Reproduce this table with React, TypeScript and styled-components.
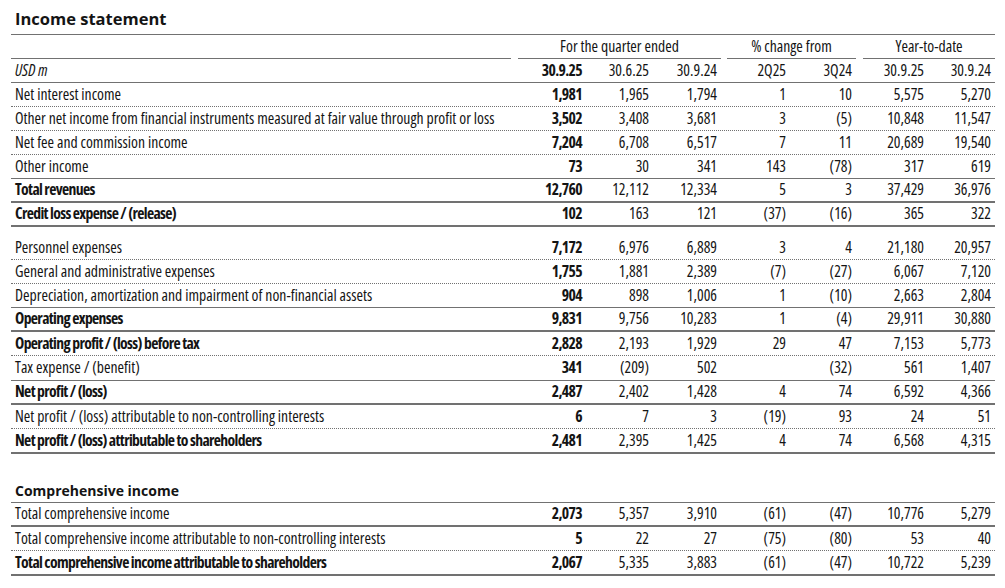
import React from "react";
import styled, { createGlobalStyle, css } from "styled-components";

const Global = createGlobalStyle`
  html, body { margin: 0; padding: 0; background: #ffffff; }
  body {
    font-family: "Open Sans", "Roboto", "Liberation Sans", sans-serif;
    font-stretch: 75%;
    color: #141414;
  }
`;

const LINE = "#717171";
const COLS = "507px 68px 67px 68px 69px 66px 72px 67px";

type Border = "dotted" | "thin" | "thick" | "none";

const boldText = css`
  font-weight: 700;
  letter-spacing: -0.65px;
`;

const Page = styled.div`
  width: 984px;
  padding: 0 10px 0 11px;
`;

const Title = styled.h1`
  margin: 0;
  box-sizing: border-box;
  height: 35px;
  padding: 9px 0 0 4px;
  font-family: "Open Sans", "Liberation Sans", Arial, sans-serif;
  font-stretch: 100%;
  font-size: 16.5px;
  line-height: 20px;
  font-weight: 700;
  border-bottom: 1px solid ${LINE};
`;

const GroupRow = styled.div`
  display: grid;
  grid-template-columns: 507px 203px 135px 139px;
  height: 24px;
`;

const Group = styled.div<{ $gapL?: number; $gapR?: number }>`
  box-sizing: border-box;
  height: 24px;
  margin-left: ${(p) => p.$gapL ?? 0}px;
  margin-right: ${(p) => p.$gapR ?? 0}px;
  border-bottom: 1px solid ${LINE};
  text-align: center;
  font-size: 15.7px;
  line-height: 22px;
`;

const borderCss = (b: Border) => {
  switch (b) {
    case "dotted":
      return css`border-bottom: 1px dotted ${LINE};`;
    case "thin":
      return css`border-bottom: 1px solid ${LINE};`;
    case "thick":
      return css`border-bottom: 2px solid ${LINE};`;
    default:
      return css`border-bottom: 1px solid transparent;`;
  }
};

const Row = styled.div<{ $border: Border; $gapTop?: number; $h?: number }>`
  display: grid;
  grid-template-columns: ${COLS};
  box-sizing: border-box;
  height: ${(p) => p.$h ?? 24}px;
  padding-bottom: 2px;
  margin-top: ${(p) => p.$gapTop ?? 0}px;
  align-items: center;
  font-size: 15.7px;
  line-height: 20px;
  ${(p) => borderCss(p.$border)}
`;

const Label = styled.div<{ $bold?: boolean; $italic?: boolean }>`
  padding-left: 4px;
  white-space: nowrap;
  font-style: ${(p) => (p.$italic ? "italic" : "normal")};
  ${(p) => p.$bold && boldText}
`;

const Num = styled.div<{ $bold?: boolean }>`
  padding-right: 4px;
  text-align: right;
  white-space: nowrap;
  ${(p) => p.$bold && boldText}
`;

const SectionHeading = styled.h2`
  margin: 25px 0 0 0;
  box-sizing: border-box;
  height: 24px;
  padding: 3px 0 0 4px;
  font-family: "Open Sans", "Liberation Sans", Arial, sans-serif;
  font-stretch: 100%;
  font-size: 14px;
  line-height: 18px;
  font-weight: 700;
  border-bottom: 1px solid ${LINE};
`;

type Line = {
  label: string;
  v: string[];
  bold?: boolean;
  border: Border;
  gapTop?: number;
  h?: number;
};

const main: Line[] = [
  { label: "Net interest income", v: ["1,981", "1,965", "1,794", "1", "10", "5,575", "5,270"], border: "dotted" },
  {
    label: "Other net income from financial instruments measured at fair value through profit or loss",
    v: ["3,502", "3,408", "3,681", "3", "(5)", "10,848", "11,547"],
    border: "dotted",
  },
  { label: "Net fee and commission income", v: ["7,204", "6,708", "6,517", "7", "11", "20,689", "19,540"], border: "dotted" },
  { label: "Other income", v: ["73", "30", "341", "143", "(78)", "317", "619"], border: "thin" },
  { label: "Total revenues", v: ["12,760", "12,112", "12,334", "5", "3", "37,429", "36,976"], bold: true, border: "thick" },
  { label: "Credit loss expense / (release)", v: ["102", "163", "121", "(37)", "(16)", "365", "322"], bold: true, border: "thick" },
  { label: "Personnel expenses", v: ["7,172", "6,976", "6,889", "3", "4", "21,180", "20,957"], border: "dotted", gapTop: 9 },
  { label: "General and administrative expenses", v: ["1,755", "1,881", "2,389", "(7)", "(27)", "6,067", "7,120"], border: "dotted" },
  {
    label: "Depreciation, amortization and impairment of non-financial assets",
    v: ["904", "898", "1,006", "1", "(10)", "2,663", "2,804"],
    border: "thin",
  },
  { label: "Operating expenses", v: ["9,831", "9,756", "10,283", "1", "(4)", "29,911", "30,880"], bold: true, border: "thick" },
  { label: "Operating profit / (loss) before tax", v: ["2,828", "2,193", "1,929", "29", "47", "7,153", "5,773"], bold: true, border: "dotted" },
  { label: "Tax expense / (benefit)", v: ["341", "(209)", "502", "", "(32)", "561", "1,407"], border: "thin", h: 25 },
  { label: "Net profit / (loss)", v: ["2,487", "2,402", "1,428", "4", "74", "6,592", "4,366"], bold: true, border: "thick" },
  {
    label: "Net profit / (loss) attributable to non-controlling interests",
    v: ["6", "7", "3", "(19)", "93", "24", "51"],
    border: "dotted",
  },
  {
    label: "Net profit / (loss) attributable to shareholders",
    v: ["2,481", "2,395", "1,425", "4", "74", "6,568", "4,315"],
    bold: true,
    border: "thick",
    h: 25,
  },
];

const comprehensive: Line[] = [
  { label: "Total comprehensive income", v: ["2,073", "5,357", "3,910", "(61)", "(47)", "10,776", "5,279"], border: "thick" },
  {
    label: "Total comprehensive income attributable to non-controlling interests",
    v: ["5", "22", "27", "(75)", "(80)", "53", "40"],
    border: "dotted",
  },
  {
    label: "Total comprehensive income attributable to shareholders",
    v: ["2,067", "5,335", "3,883", "(61)", "(47)", "10,722", "5,239"],
    bold: true,
    border: "thick",
    h: 25,
  },
];

const colHeads = ["30.9.25", "30.6.25", "30.9.24", "2Q25", "3Q24", "30.9.25", "30.9.24"];

const DataRow: React.FC<{ line: Line }> = ({ line }) => (
  <Row $border={line.border} $gapTop={line.gapTop} $h={line.h}>
    <Label $bold={line.bold}>{line.label}</Label>
    {line.v.map((x, i) => (
      <Num key={i} $bold={i === 0}>
        {x}
      </Num>
    ))}
  </Row>
);

export default function App() {
  return (
    <Page>
      <Global />
      <Title>Income statement</Title>
      <GroupRow>
        <Group $gapR={7} />
        <Group>For the quarter ended</Group>
        <Group $gapL={6}>% change from</Group>
        <Group $gapL={7}>Year-to-date</Group>
      </GroupRow>
      <Row $border="thin">
        <Label $italic>USD m</Label>
        {colHeads.map((h, i) => (
          <Num key={i} $bold={i === 0}>
            {h}
          </Num>
        ))}
      </Row>
      {main.map((l, i) => (
        <DataRow key={i} line={l} />
      ))}
      <SectionHeading>Comprehensive income</SectionHeading>
      {comprehensive.map((l, i) => (
        <DataRow key={i} line={l} />
      ))}
    </Page>
  );
}
